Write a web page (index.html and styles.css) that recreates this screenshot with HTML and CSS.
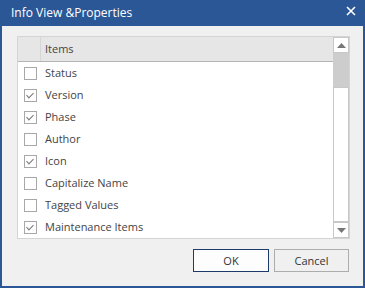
FILE: index.html
```html
<!DOCTYPE html>
<html>
<head>
  <title>Info View &amp;Properties</title>
  <link rel="stylesheet" href="styles.css">
</head>
<body>
  <div class="window">
    <div class="titlebar">
      <span class="title">Info View &amp;Properties</span>
      <svg class="close" width="10" height="10" viewBox="0 0 10 10">
        <path d="M1 1 L9 9 M9 1 L1 9" stroke="#fff" stroke-width="1.6"/>
      </svg>
    </div>
    <div class="client">
      <div class="listbox">
        <div class="list">
          <div class="header">
            <div class="hcell-check"></div>
            <div class="hcell">Items</div>
          </div>
          <div class="row"><span class="check"></span><span class="label">Status</span></div>
          <div class="row"><span class="check on"></span><span class="label">Version</span></div>
          <div class="row"><span class="check on"></span><span class="label">Phase</span></div>
          <div class="row"><span class="check"></span><span class="label">Author</span></div>
          <div class="row"><span class="check on"></span><span class="label">Icon</span></div>
          <div class="row"><span class="check"></span><span class="label">Capitalize Name</span></div>
          <div class="row"><span class="check"></span><span class="label">Tagged Values</span></div>
          <div class="row"><span class="check on"></span><span class="label">Maintenance Items</span></div>
        </div>
        <div class="scrollbar">
          <div class="sb-btn">
            <svg width="9" height="5" viewBox="0 0 9 5"><path d="M4.5 0 L9 5 L0 5 Z" fill="#777"/></svg>
          </div>
          <div class="sb-thumb"></div>
          <div class="sb-track"></div>
          <div class="sb-btn">
            <svg width="9" height="5" viewBox="0 0 9 5"><path d="M0 0 L9 0 L4.5 5 Z" fill="#777"/></svg>
          </div>
        </div>
      </div>
      <div class="buttons">
        <button class="btn default">OK</button>
        <button class="btn">Cancel</button>
      </div>
    </div>
  </div>
</body>
</html>
```

FILE: styles.css
```css
html, body {
  margin: 0;
  padding: 0;
}

body {
  font-family: "Open Sans", "Noto Sans", sans-serif;
  font-size: 11px;
  color: #333;
}

.window {
  width: 365px;
  height: 288px;
  box-sizing: border-box;
  border: 2px solid #2b5797;
  display: flex;
  flex-direction: column;
  background-color: #f0f0f0;
}

.titlebar {
  height: 24px;
  background-color: #2b5797;
  display: flex;
  align-items: center;
  justify-content: space-between;
  padding: 0 7px 3px 9px;
  box-sizing: border-box;
}

.title {
  color: #fff;
  font-size: 12px;
}

.close {
  margin-top: -3px;
}

.client {
  flex: 1;
  padding: 10px 13px 0 15px;
}

.listbox {
  height: 203px;
  box-sizing: border-box;
  border: 1px solid #d4d4d4;
  background-color: #fff;
  display: flex;
}

.list {
  flex: 1;
}

.header {
  height: 24px;
  background-color: #e6e6e6;
  border-bottom: 1px solid #b4b4b4;
  display: flex;
}

.hcell-check {
  width: 22px;
  border-right: 1px solid #d6d6d6;
}

.hcell {
  padding-left: 4px;
  line-height: 24px;
  color: #444;
}

.row {
  height: 22px;
  display: flex;
  align-items: center;
  color: #444;
}

.label {
  margin-bottom: 2px;
}

.check {
  width: 11px;
  height: 11px;
  border: 1px solid #a8a8a8;
  background-color: #fff;
  margin: 0 8px 0 6px;
  position: relative;
}

.check.on::after {
  content: "";
  position: absolute;
  left: 3px;
  top: 1px;
  width: 3px;
  height: 6px;
  border-right: 1px solid #777;
  border-bottom: 1px solid #777;
  transform: rotate(45deg);
}

.scrollbar {
  width: 16px;
  display: flex;
  flex-direction: column;
  background-color: #e4e4e4;
}

.sb-btn {
  height: 16px;
  box-sizing: border-box;
  border: 1px solid #c8c8c8;
  background-color: #fff;
  display: flex;
  align-items: center;
  justify-content: center;
}

.sb-thumb {
  height: 34px;
  background-color: #cdcdcd;
}

.sb-track {
  flex: 1;
  box-sizing: border-box;
  border: 1px solid #c8c8c8;
  background-color: #fff;
}

.buttons {
  display: flex;
  justify-content: flex-end;
  gap: 5px;
  margin-top: 10px;
  padding-right: 1px;
}

.btn {
  height: 23px;
  width: 75px;
  font-family: "Open Sans", "Noto Sans", sans-serif;
  font-size: 11px;
  color: #333;
  background-color: #f0f0f0;
  border: 1px solid #adadad;
  padding: 0;
}

.btn.default {
  width: 76px;
  border-color: #1d3a6b;
  background-color: #fdfdfd;
}
```
